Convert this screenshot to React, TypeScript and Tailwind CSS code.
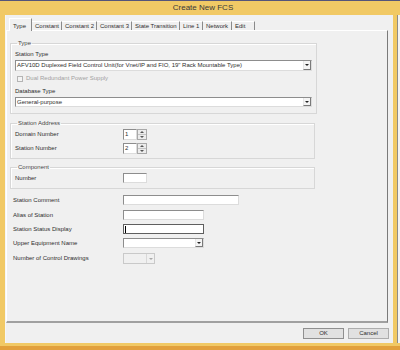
import React from "react";

const tabs = [
  { name: "Type", w: "w-[23px]" },
  { name: "Constant", w: "w-[30px]" },
  { name: "Constant 2", w: "w-[35px]" },
  { name: "Constant 3", w: "w-[35px]" },
  { name: "State Transition", w: "w-[48px]" },
  { name: "Line 1", w: "w-[23px]" },
  { name: "Network", w: "w-[29px]" },
  { name: "Edit", w: "w-[23px]" },
];

function Arrow({ disabled }: { disabled?: boolean }) {
  return (
    <svg width="4" height="2" viewBox="0 0 4 2">
      <path d="M0 0h4L2 2z" fill={disabled ? "#a8a8a8" : "#222"} />
    </svg>
  );
}

function Select({ value, w, h, disabled }: { value?: string; w: string; h?: string; disabled?: boolean }) {
  return (
    <div
      className={`${w} ${h ?? "h-[10px]"} flex border ${
        disabled
          ? "bg-[#f0f0f0] border-[#c9c9c9]"
          : "bg-white border-t-[#8d8d8d] border-l-[#8d8d8d] border-r-[#dcdcdc] border-b-[#dcdcdc]"
      }`}
    >
      <div className="flex-1 pl-[1px] flex items-center truncate">{value}</div>
      <div
        className={`w-[8px] flex items-center justify-center border-l ${
          disabled
            ? "border-[#d8d8d8]"
            : "border-[#e6e6e6] bg-[#f4f4f4] border-b border-b-[#7a7a7a] border-r border-r-[#7a7a7a]"
        }`}
      >
        <Arrow disabled={disabled} />
      </div>
    </div>
  );
}

function Spinner({ value }: { value: string }) {
  return (
    <div className="flex h-[11px]">
      <div className="w-[14px] bg-white border border-t-[#8d8d8d] border-l-[#8d8d8d] border-r-[#dcdcdc] border-b-[#dcdcdc] leading-[9px] pl-[1px]">
        {value}
      </div>
      <div className="w-[10px] flex flex-col border border-[#a9a9a9] bg-[#ececec]">
        <div className="flex-1 flex items-center justify-center border-b border-[#c4c4c4]">
          <svg width="4" height="2" viewBox="0 0 4 2">
            <path d="M0 2h4L2 0z" fill="#555" />
          </svg>
        </div>
        <div className="flex-1 flex items-center justify-center">
          <svg width="4" height="2" viewBox="0 0 4 2">
            <path d="M0 0h4L2 2z" fill="#555" />
          </svg>
        </div>
      </div>
    </div>
  );
}

function Input({ w, focused }: { w: string; focused?: boolean }) {
  return (
    <div
      className={`${w} h-[10px] bg-white border flex items-center pl-[1px] ${
        focused
          ? "border-[#5f5f5f]"
          : "border-t-[#8d8d8d] border-l-[#8d8d8d] border-r-[#dcdcdc] border-b-[#dcdcdc]"
      }`}
    >
      {focused && <div className="w-[1px] h-[7px] bg-black" />}
    </div>
  );
}

function Group({ title, children, className }: { title: string; children: React.ReactNode; className?: string }) {
  return (
    <fieldset className={`w-[305px] ml-[3px] border border-[#d7d7d7] shadow-[inset_1px_1px_0_#fff] px-[4px] ${className ?? ""}`}>
      <legend className="ml-[2px] px-[1px] leading-[8px] text-[#444]">{title}</legend>
      {children}
    </fieldset>
  );
}

export default function App() {
  return (
    <div
      className="w-[400px] h-[350px] bg-[#f1c965] flex flex-col overflow-hidden text-[6px] text-[#2e2e2e]"
      style={{ fontFamily: '"Liberation Sans", Arial, sans-serif' }}
    >
      <div className="h-[1px] bg-[#55557a]" />
      <div className="h-[14px] flex items-center justify-center text-[8px] text-[#3a3a3a] pl-[6px]">Create New FCS</div>

      <div className="flex h-[328px]">
        <div className="w-[5px]" />
        <div className="w-[388px] bg-[#f0f0f0] flex flex-col border-l border-[#f6f6f6]">
          {/* Tabs */}
          <div className="h-[15px] flex items-end pl-[3px]">
            {tabs.map((t, i) =>
              i === 0 ? (
                <div
                  key={t.name}
                  className={`${t.w} h-[13px] -mb-[1px] relative z-10 bg-[#f0f0f0] border-t border-l border-r border-t-white border-l-white border-r-[#8a8a8a] pl-[3px] pt-[4px] leading-[7px]`}
                >
                  {t.name}
                </div>
              ) : (
                <div
                  key={t.name}
                  className={`${t.w} h-[9px] border-t border-r border-t-white border-r-[#8a8a8a] pl-[3px] leading-[9px] whitespace-nowrap`}
                >
                  {t.name}
                </div>
              )
            )}
          </div>

          {/* Panel */}
          <div className="w-[382px] h-[293px] border-t border-l border-t-white border-l-white border-r border-r-[#7a7a7a] border-b-2 border-b-[#a0a0a0] flex flex-col">
            <Group title="Type" className="mt-[8px] pb-[6px]">
              <div className="leading-[8px] mt-[3px]">Station Type</div>
              <div className="mt-[2px]">
                <Select w="w-[297px]" h="h-[11px]" value={'AFV10D Duplexed Field Control Unit(for Vnet/IP and FIO, 19" Rack Mountable Type)'} />
              </div>
              <div className="flex items-center gap-[3px] mt-[4px] h-[7px] pl-[2px] text-[#a2a2a2]">
                <div className="w-[6px] h-[6px] border border-[#b4b4b4] bg-[#f4f4f4]" />
                <span>Dual Redundant Power Supply</span>
              </div>
              <div className="leading-[8px] mt-[5px]">Database Type</div>
              <div className="mt-[2px]">
                <Select w="w-[297px]" value="General-purpose" />
              </div>
            </Group>

            <Group title="Station Address" className="mt-[5px] pb-[4px]">
              <div className="flex items-center mt-[2px]">
                <div className="w-[108px]">Domain Number</div>
                <Spinner value="1" />
              </div>
              <div className="flex items-center mt-[3px]">
                <div className="w-[108px]">Station Number</div>
                <Spinner value="2" />
              </div>
            </Group>

            <Group title="Component" className="mt-[4px] pb-[5px]">
              <div className="flex items-center mt-[2px]">
                <div className="w-[108px]">Number</div>
                <Input w="w-[24px]" />
              </div>
            </Group>

            <div className="ml-[6px] mt-[6px] flex flex-col gap-[4px]">
              <div className="flex items-center">
                <div className="w-[110px]">Station Comment</div>
                <Input w="w-[116px]" />
              </div>
              <div className="flex items-center mt-[1px]">
                <div className="w-[110px]">Alias of Station</div>
                <Input w="w-[81px]" />
              </div>
              <div className="flex items-center">
                <div className="w-[110px]">Station Status Display</div>
                <Input w="w-[81px]" focused />
              </div>
              <div className="flex items-center">
                <div className="w-[110px]">Upper Equipment Name</div>
                <Select w="w-[81px]" />
              </div>
              <div className="flex items-center mt-[1px]">
                <div className="w-[110px]">Number of Control Drawings</div>
                <Select w="w-[32px]" h="h-[11px]" disabled />
              </div>
            </div>
          </div>

          {/* Buttons */}
          <div className="flex justify-end gap-[4px] mt-[5px] pr-[4px]">
            <button className="w-[41px] h-[11px] bg-[#e1e1e1] border border-[#8f8f8f] leading-[9px] text-[6px]">OK</button>
            <button className="w-[41px] h-[11px] bg-[#e1e1e1] border border-[#adadad] leading-[9px] text-[6px]">Cancel</button>
          </div>
        </div>
        <div className="w-[4px]" />
        <div className="w-[1px] bg-[#8c8c8c]" />
        <div className="flex-1 bg-[#f3f3f3]" />
      </div>

      <div className="h-[3px]" />
      <div className="flex-1 bg-[#e2a03c]" />
    </div>
  );
}
